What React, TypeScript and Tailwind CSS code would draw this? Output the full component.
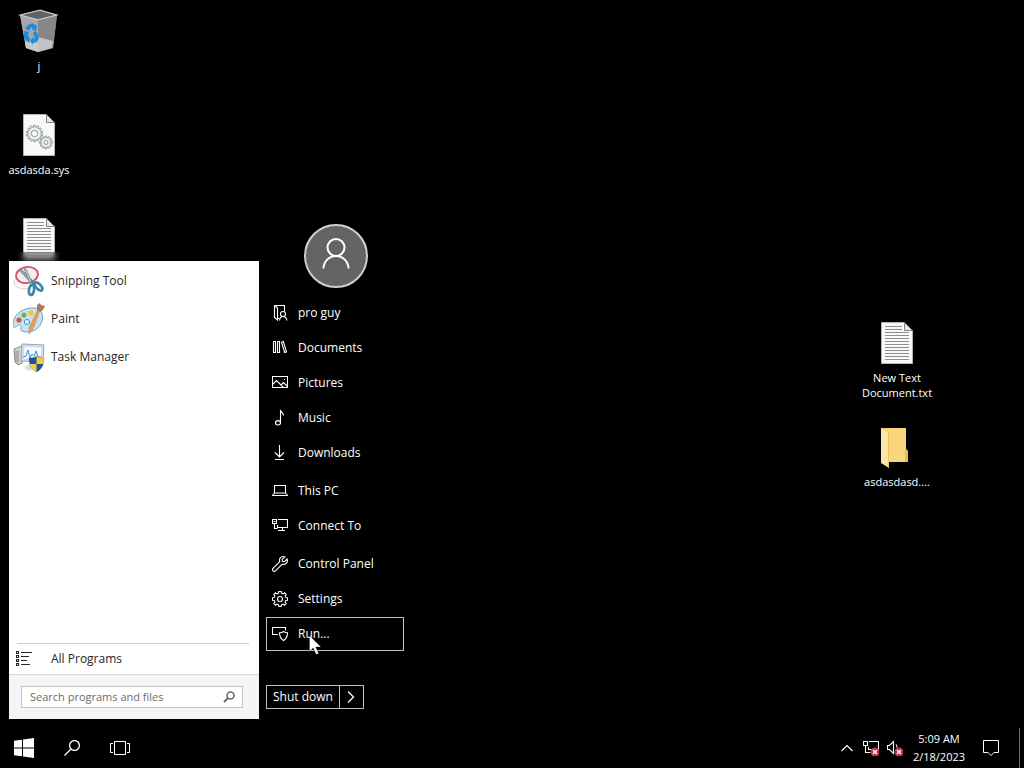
import React from 'react';

interface IconProps {
  className?: string;
}

interface LineIconProps extends IconProps {
  children: React.ReactNode;
}

const LineIcon: React.FC<LineIconProps> = ({ className, children }) => (
  <svg
    viewBox="0 0 16 16"
    fill="none"
    stroke="currentColor"
    strokeWidth="1.1"
    className={className || 'h-4 w-4 shrink-0'}
    aria-hidden="true"
  >
    {children}
  </svg>
);

// Outline of a cog centred on (cx, cy)
const cogPath = (
  cx: number,
  cy: number,
  inner: number,
  outer: number,
  teeth: number
) => {
  const points: string[] = [];
  const step = (Math.PI * 2) / teeth;
  for (let i = 0; i < teeth; i++) {
    const a = i * step - Math.PI / 2;
    [
      [a - step * 0.3, inner],
      [a - step * 0.2, outer],
      [a + step * 0.2, outer],
      [a + step * 0.3, inner],
    ].forEach(([angle, r]) => {
      const x = (cx + Math.cos(angle) * r).toFixed(2);
      const y = (cy + Math.sin(angle) * r).toFixed(2);
      points.push(`${x} ${y}`);
    });
  }
  return `M${points.join('L')}Z`;
};

const RecycleBinIcon = () => (
  <svg viewBox="0 0 48 48" className="h-12 w-12" aria-hidden="true">
    <path d="M5 7 25 2l17 5-4 33-15 4-12-4z" fill="#8b8d90" />
    <path d="M5 7l18 5v32l-12-4z" fill="#a5a7aa" />
    <path d="M23 12l19-5-4 33-15 4z" fill="#85878a" />
    <path d="M10 34l13-5 15 4-1 7-14 4-12-4z" fill="#d5d6d7" opacity=".75" />
    <path d="M7 7l18-4 15 4-17 4z" fill="#606265" />
    <path
      d="M5 7l20-5 17 5-19 5z"
      fill="none"
      stroke="#cfd0d1"
      strokeWidth="1.1"
    />
    <g fill="#2289d6">
      <path d="M12 18l5-3 5 3-1 5-3-1-2-3-2 4-4-3z" />
      <path d="M9 23l5 1-1 3 2 4-1 4-5-5z" />
      <path d="M21 23l3 7-2 4-4 1v2l-3-4 3-4v2l2-1-2-5z" />
    </g>
  </svg>
);

const PageShape = () => (
  <>
    <path d="M8.500 2.500h23l8 8v33h-31z" fill="#f7f8f8" stroke="#b4b4b4" />
    <path d="M31.500 2.500v8h8z" fill="#e6e6e6" stroke="#828282" />
  </>
);

const SysFileIcon = () => (
  <svg viewBox="0 0 48 48" className="h-12 w-12" aria-hidden="true">
    <PageShape />
    <g fill="#eceeef" stroke="#878c90" strokeWidth=".9">
      <path d={cogPath(19.5, 21.5, 6.4, 8.2, 14)} />
      <circle cx="19.500" cy="21.500" r="3.200" fill="#fff" />
      <path d={cogPath(31, 30.5, 4.8, 6.4, 12)} />
      <circle cx="31" cy="30.500" r="2" fill="#fff" />
    </g>
  </svg>
);

const TextFileIcon = () => (
  <svg viewBox="0 0 48 48" className="h-12 w-12" aria-hidden="true">
    <PageShape />
    <path
      d="M12 6.500h17M12 9.500h17M12 12.500h24M12 15.500h24M12 18.500h24M12 21.500h24M12 24.500h24M12 27.500h24M12 30.500h24M12 33.500h24M12 36.500h24M12 39.500h24"
      stroke="#8d8f91"
    />
  </svg>
);

const FolderIcon = () => (
  <svg viewBox="0 0 48 48" className="h-12 w-12" aria-hidden="true">
    <path d="M8 4h25v21l2 2v11H8z" fill="#f6cf6a" />
    <path d="M14 4h19v34H15z" fill="#f9d67c" />
    <path d="M32 25l3 2v11h-3z" fill="#e9bb50" />
    <path d="M8 4l8 5v35l-8-5z" fill="#fce6a6" />
    <path d="M16 9v35l-1-1V9z" fill="#ecc360" />
  </svg>
);

const SnippingToolIcon = () => (
  <svg viewBox="0 0 32 32" className="h-8 w-8 shrink-0" aria-hidden="true">
    <ellipse cx="11" cy="17" rx="10" ry="7" fill="#fdf6f6" stroke="#e6cdd0" />
    <ellipse
      cx="14"
      cy="10"
      rx="11"
      ry="8"
      fill="#f1edee"
      stroke="#d6506a"
      strokeWidth="1.800"
      transform="rotate(-8 14 10)"
    />
    <path d="M6 5l2-1 12 12-2 2z" fill="#8fa39f" stroke="#5d7672" strokeWidth=".6" />
    <path d="M11 4h2l6 13-2 1z" fill="#c2cecb" stroke="#5d7672" strokeWidth=".6" />
    <path d="M18 15l4 3-3 3z" fill="#3a86ad" />
    <g fill="none" stroke="#3a86ad" strokeWidth="2.600">
      <ellipse cx="18.500" cy="25" rx="2.500" ry="5" transform="rotate(10 18.500 25)" />
      <ellipse cx="25.500" cy="21.500" rx="2.500" ry="5" transform="rotate(-42 25.500 21.500)" />
    </g>
  </svg>
);

const PaintIcon = () => (
  <svg viewBox="0 0 32 32" className="h-8 w-8 shrink-0" aria-hidden="true">
    <path
      d="M0 22C0 12 8 6 18 5c9-1 13 5 11 13-2 7-8 11-15 11-4 0-7-1-6-4 1-2-1-4-3-3-2 2-5 4-5 0z"
      fill="#c6e2f4"
      stroke="#6d9fc5"
    />
    <circle cx="6" cy="17" r="2.600" fill="#cf5747" />
    <circle cx="11" cy="12" r="2.600" fill="#6cb45a" />
    <circle cx="18" cy="10" r="2.800" fill="#efc83f" />
    <circle cx="14" cy="19" r="2.600" fill="#e8f4fb" stroke="#4992cb" />
    <path d="M25 6l2 1-7 19-4 5v-6z" fill="#e2a25e" stroke="#bd7f42" strokeWidth=".5" />
    <path d="M24 2l3-2 1 2 4 1-2 4-3 2-3-2z" fill="#a9795c" />
  </svg>
);

const TaskManagerIcon = () => (
  <svg viewBox="0 0 32 32" className="h-8 w-8 shrink-0" aria-hidden="true">
    <path d="M1 8l8-3v17l-4 2-3-3z" fill="#d3d5d4" stroke="#888d8d" />
    <path d="M3 10v11M5 9v13" stroke="#777" strokeWidth=".8" />
    <path d="M9 3l22 1-1 17-22-1z" fill="#e3e5e4" stroke="#9fa4a4" />
    <path d="M11 5l18 1-1 13-18-1z" fill="#f4faff" stroke="#a9c5db" strokeWidth=".6" />
    <path
      d="M10 16l3-1 2-6 2 8 2-4 2 2 2-5 2 6h3"
      fill="none"
      stroke="#4a8cc8"
    />
    <path d="M11 27l5-4 6 5-6 2z" fill="#dcdedd" />
    <path
      d="M23.500 15c2 2 5 2 7.500 2 0 7-2 11-7.500 14-5.500-3-7.500-7-7.500-14 3 0 5.500 0 7.500-2z"
      fill="#f5cb45"
      stroke="#8f9aa0"
      strokeWidth=".6"
    />
    <path d="M23.500 15v8h-6.700c-.6-2-.8-4-.8-6 3 0 5.500 0 7.500-2z" fill="#1c5794" />
    <path d="M23.500 23h6.700c-1 3.400-3.200 6-6.700 8z" fill="#1c5794" />
  </svg>
);

const SearchIcon: React.FC<IconProps> = ({ className }) => (
  <LineIcon className={className}>
    <circle cx="10.500" cy="5.500" r="4.900" strokeWidth="1.300" />
    <path d="M7 9L.5 15.500" strokeWidth="1.300" />
  </LineIcon>
);

interface MenuEntry {
  label: string;
  icon: React.ReactNode;
  startsGroup?: boolean;
}

const programs: MenuEntry[] = [
  { label: 'Snipping Tool', icon: <SnippingToolIcon /> },
  { label: 'Paint', icon: <PaintIcon /> },
  { label: 'Task Manager', icon: <TaskManagerIcon /> },
];

const places: MenuEntry[] = [
  {
    label: 'pro guy',
    icon: (
      <LineIcon>
        <path d="M7.500 13.500H6M2.500.5h10v6M2.500.5l3 2.500v12l-3-2.500z" />
        <circle cx="11" cy="9" r="2.500" />
        <path d="M7.500 15.500c.3-2.500 1.500-4 3.500-4s3.500 1.500 4 4" />
      </LineIcon>
    ),
  },
  {
    label: 'Documents',
    icon: (
      <LineIcon>
        <path d="M1.500 1.500h2v11h-2zM5.500 1.500h2v11h-2zM9.500 2.200l1.800-.7 3.200 10.300-1.800.7z" />
      </LineIcon>
    ),
  },
  {
    label: 'Pictures',
    icon: (
      <LineIcon>
        <path d="M.5 1.500h15v11H.5zM.5 9.500l4-4 7 7M9 10l2.500-2.500 4 4" />
        <path d="M12 4.500h1" />
      </LineIcon>
    ),
  },
  {
    label: 'Music',
    icon: (
      <LineIcon>
        <path d="M8.500 12.500V0c0 2.500 3 2.500 3 5.500" />
        <ellipse cx="6" cy="12.800" rx="2.500" ry="2.200" />
      </LineIcon>
    ),
  },
  {
    label: 'Downloads',
    icon: (
      <LineIcon>
        <path d="M7.500 0v11.500M3 7.500l4.500 4.500L12 7.500M3 14.500h9" />
      </LineIcon>
    ),
  },
  {
    label: 'This PC',
    startsGroup: true,
    icon: (
      <LineIcon>
        <path d="M2.500 2.500h11v7.500h-11zM2.500 10l-2 2.500h15l-2-2.500" />
      </LineIcon>
    ),
  },
  {
    label: 'Connect To',
    icon: (
      <LineIcon>
        <path d="M.5 1.500h4v4h-4zM6 1.500h9.500v8H5.500M2.500 5.500v5h3M10.500 9.500v3M6 12.500h7M5.500 7v3" />
        <path d="M1.500 3.500h2" />
      </LineIcon>
    ),
  },
  {
    label: 'Control Panel',
    startsGroup: true,
    icon: (
      <LineIcon>
        <path d="M12.800.9c-1.700-.6-3.500-.2-4.500 1-.9 1.100-1 2.500-.6 3.700L1 12.300c-.8.900-.6 1.900 0 2.500s1.700.7 2.500 0l6.700-6.600c1.300.4 2.800.2 3.900-.8 1.200-1.100 1.600-2.900 1-4.400l-2.700 2.600-2-.4-.3-1.800z" />
      </LineIcon>
    ),
  },
  {
    label: 'Settings',
    icon: (
      <LineIcon>
        <path d={cogPath(8, 8, 6, 7.7, 8)} />
        <circle cx="8" cy="8" r="2.500" />
      </LineIcon>
    ),
  },
  {
    label: 'Run...',
    icon: (
      <LineIcon>
        <path d="M6 8.500H.5v-7h13v3" />
        <path d="M11.500 5.500c1.200 1 2.500 1.300 4 1.300 0 4-1 6-4 7.700-3-1.700-4-3.700-4-7.700 1.500 0 2.800-.3 4-1.300z" />
      </LineIcon>
    ),
  },
];

interface DesktopIconProps {
  label?: string;
  children: React.ReactNode;
}

const DesktopIcon: React.FC<DesktopIconProps> = ({ label, children }) => (
  <div className="flex h-[104px] w-[78px] flex-col items-center pt-2">
    {children}
    {label && (
      <span className="w-full pt-[2px] text-center text-[11px] leading-[15px]">
        {label}
      </span>
    )}
  </div>
);

const StartMenu = () => (
  <div className="absolute bottom-0 left-0 flex items-end">
    <div className="bg-black/30 p-[9px] pr-0 backdrop-blur-[3px]">
      <div className="flex h-[458px] w-[250px] flex-col bg-white text-[#262626]">
        <ul>
          {programs.map((program) => (
            <li key={program.label}>
              <button className="flex h-[38px] w-full items-center gap-[6px] pl-1 pt-[2px] text-left">
                {program.icon}
                {program.label}
              </button>
            </li>
          ))}
        </ul>
        <div className="ml-2 mr-[10px] mt-auto border-t border-[#d0d0d0]" />
        <button className="flex h-[30px] items-center gap-[19px] pl-[7px] text-left">
          <LineIcon>
            <path d="M.5.500h2v2h-2zM.5 4.500h2v2h-2zM.5 8.500h2v2h-2zM.5 12.500h2v2h-2zM5 1.500h11M5 5.500h8M5 9.500h6M5 13.500h9" />
          </LineIcon>
          All Programs
        </button>
        <div className="border-t border-[#d6d6d6] bg-[#f4f4f4] px-3 pb-[11px] pt-[11px]">
          <label className="mr-1 flex h-[22px] items-center border border-[#c6c6c6] bg-white pl-2 pr-[7px]">
            <input
              type="text"
              aria-label="Search programs and files"
              placeholder="Search programs and files"
              className="min-w-0 flex-1 text-[11px] outline-none placeholder:text-[#6d6d6d]"
            />
            <svg
              viewBox="0 0 12 12"
              fill="none"
              stroke="#6b6b6b"
              className="h-3 w-3"
              aria-hidden="true"
            >
              <circle cx="7.500" cy="4.500" r="3.500" strokeWidth="1.600" />
              <path d="M5 7L1 11" strokeWidth="2" />
            </svg>
          </label>
        </div>
      </div>
    </div>

    <div className="flex flex-col items-start bg-black pb-[19px] pl-[7px] pr-2">
      <div className="ml-[38px] flex h-16 w-16 items-center justify-center rounded-full border-2 border-[#cfcfcf] bg-[#646464]">
        <svg
          viewBox="0 0 32 36"
          fill="none"
          stroke="#fff"
          strokeWidth="2"
          className="h-9 w-8"
          aria-hidden="true"
        >
          <circle cx="16" cy="9.500" r="8.500" />
          <path d="M3.500 30.500a12.500 12.500 0 0 1 25 0" />
        </svg>
      </div>
      <ul className="mt-2 flex w-[138px] flex-col gap-px text-white">
        {places.map((place) => (
          <li
            key={place.label}
            className={place.startsGroup ? 'relative mt-[3px]' : 'relative'}
          >
            <button
              className={`flex h-[34px] w-full items-center gap-[10px] border pl-[5px] text-left ${
                place.label === 'Run...'
                  ? 'border-[#c0c0c0]'
                  : 'border-transparent'
              }`}
            >
              {place.icon}
              {place.label}
            </button>
            {place.label === 'Run...' && (
              <svg
                viewBox="0 0 13 20"
                className="absolute left-[43px] top-[18px] h-5 w-[13px]"
                aria-hidden="true"
              >
                <path
                  d="M.5.500v16l3.700-3.500 3 6.500 2.500-1-3-6.500h5.300z"
                  fill="#fff"
                  stroke="#000"
                  strokeWidth=".3"
                />
              </svg>
            )}
          </li>
        ))}
      </ul>
      <div className="mt-[34px] flex h-6 border border-[#c0c0c0] text-white">
        <button className="px-[6px]">Shut down</button>
        <button
          aria-label="Shut down options"
          className="flex w-6 items-center justify-center border-l border-[#c0c0c0]"
        >
          <svg
            viewBox="0 0 8 12"
            fill="none"
            stroke="currentColor"
            strokeWidth="1.300"
            className="h-3 w-2"
            aria-hidden="true"
          >
            <path d="M1 .5L6.500 6 1 11.500" />
          </svg>
        </button>
      </div>
    </div>
  </div>
);

const ErrorBadge = () => (
  <g>
    <circle cx="12" cy="12" r="4.500" fill="#c8324a" stroke="none" />
    <path d="M10 10l4 4M14 10l-4 4" stroke="#fff" strokeWidth="1.200" />
  </g>
);

const Taskbar = () => (
  <footer className="flex h-10 items-stretch bg-black text-white">
    <button aria-label="Start" className="flex w-12 items-center justify-center">
      <svg viewBox="0 0 20 20" fill="currentColor" className="h-5 w-5" aria-hidden="true">
        <path d="M0 2.800L8 1.700v7.800H0zM9 1.500L20 0v9.500H9zM0 10.500h8v7.800l-8-1.100zM9 10.500h11V20L9 18.500z" />
      </svg>
    </button>
    <button aria-label="Search" className="flex w-12 items-center justify-center">
      <SearchIcon className="h-4 w-4" />
    </button>
    <button aria-label="Task View" className="flex w-12 items-center justify-center">
      <svg
        viewBox="0 0 20 14"
        fill="none"
        stroke="currentColor"
        className="h-[14px] w-5"
        aria-hidden="true"
      >
        <path d="M4.500.5h11v13h-11zM3 2.500H.5v9H3M17 2.500h2.500v9H17" />
      </svg>
    </button>

    <div className="ml-auto flex items-stretch">
      <button
        aria-label="Show hidden icons"
        className="flex w-6 items-center justify-center"
      >
        <svg
          viewBox="0 0 12 8"
          fill="none"
          stroke="currentColor"
          className="h-2 w-3"
          aria-hidden="true"
        >
          <path d="M.5 7L6 1.500 11.500 7" strokeWidth="1.200" />
        </svg>
      </button>
      <button aria-label="Network" className="flex w-6 items-center justify-center">
        <LineIcon>
          <path d="M.5 1.500h4v4h-4zM6 1.500h9.500v8H5.500M2.500 5.500v7h5M5.500 7v3" />
          <ErrorBadge />
        </LineIcon>
      </button>
      <button aria-label="Volume" className="flex w-6 items-center justify-center">
        <LineIcon>
          <path d="M.5 5.500h2l4-4v12l-4-4h-2zM9 4.500c1 1.500 1 2 1 3" />
          <ErrorBadge />
        </LineIcon>
      </button>
      <button className="w-16 text-center text-[11px] leading-[18px]">
        <span className="block">5:09 AM</span>
        <span className="block">2/18/2023</span>
      </button>
      <button
        aria-label="Notifications"
        className="flex w-10 items-center justify-center"
      >
        <svg
          viewBox="0 0 16 16"
          fill="none"
          stroke="currentColor"
          className="h-4 w-4"
          aria-hidden="true"
        >
          <path d="M.5.500h15v12H11L8 15.500 5 12.500H.5z" />
        </svg>
      </button>
      <button
        aria-label="Show desktop"
        className="ml-2 w-[5px] border-l border-[#6a6a6a]"
      />
    </div>
  </footer>
);

const App = () => {
  return (
    <div className="flex h-screen flex-col overflow-hidden bg-black font-['Open_Sans','Noto_Sans',sans-serif] text-[12px] text-white">
      <main className="relative flex-1">
        <div className="absolute left-0 top-0">
          <DesktopIcon label="j">
            <RecycleBinIcon />
          </DesktopIcon>
          <DesktopIcon label="asdasda.sys">
            <SysFileIcon />
          </DesktopIcon>
          <DesktopIcon>
            <TextFileIcon />
          </DesktopIcon>
        </div>
        <div className="absolute right-[88px] top-[312px]">
          <DesktopIcon label="New Text Document.txt">
            <TextFileIcon />
          </DesktopIcon>
          <DesktopIcon label="asdasdasd....">
            <FolderIcon />
          </DesktopIcon>
        </div>
        <StartMenu />
      </main>
      <Taskbar />
    </div>
  );
};

export default App;
